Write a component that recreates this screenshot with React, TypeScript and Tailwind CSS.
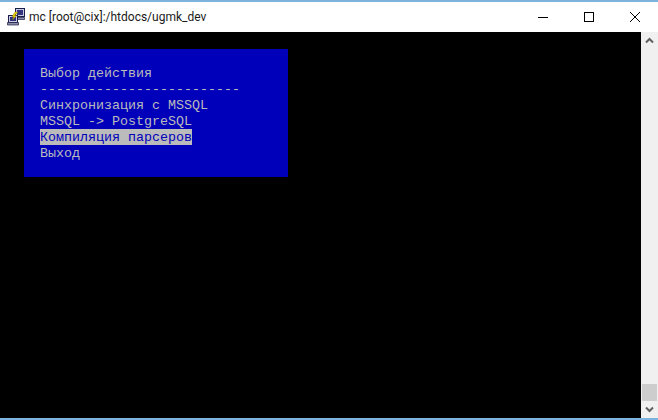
const lines = [
  { text: 'Выбор действия' },
  { text: '-------------------------' },
  { text: 'Синхронизация с MSSQL' },
  { text: 'MSSQL -> PostgreSQL' },
  { text: 'Компиляция парсеров', selected: true },
  { text: 'Выход' },
]

function PuttyIcon() {
  return (
    <svg width="18" height="18" viewBox="0 0 18 18" className="shrink-0">
      <rect x="8.5" y="0.5" width="9" height="8" fill="#c8cce4" stroke="#1c1c48" />
      <rect x="10" y="2" width="6" height="5" fill="#34347c" />
      <path d="M8.5 9.5h9v2h-9z" fill="#8a8ea8" stroke="#1c1c48" strokeWidth="0.7" />
      <rect x="1.5" y="7.5" width="9" height="7" fill="#c8cce4" stroke="#1c1c48" />
      <rect x="3" y="9" width="6" height="4" fill="#34347c" />
      <path d="M0.5 14.5h11v2.5H0.5z" fill="#8a8ea8" stroke="#1c1c48" strokeWidth="0.7" />
      <path d="M11 4 7.5 7.5h2L5.5 12l1.2-3.5H5L8 4z" fill="#f5d800" stroke="#7a6a00" strokeWidth="0.4" />
    </svg>
  )
}

function TitleBar() {
  return (
    <div className="flex h-[30px] items-center bg-white pl-[7px]">
      <PuttyIcon />
      <span className="ml-[4px] font-['Roboto',sans-serif] text-[12px] text-[#1a1a1a]">mc [root@cix]:/htdocs/ugmk_dev</span>
      <div className="ml-auto flex">
        <button className="flex h-[30px] w-[46px] items-center justify-center">
          <svg width="10" height="10" viewBox="0 0 10 10"><path d="M0 5.5h10" stroke="#000" /></svg>
        </button>
        <button className="flex h-[30px] w-[46px] items-center justify-center">
          <svg width="10" height="10" viewBox="0 0 10 10"><rect x="0.5" y="0.5" width="9" height="9" fill="none" stroke="#000" /></svg>
        </button>
        <button className="flex h-[30px] w-[46px] items-center justify-center">
          <svg width="10" height="10" viewBox="0 0 10 10"><path d="M0 0l10 10M10 0L0 10" stroke="#000" /></svg>
        </button>
      </div>
    </div>
  )
}

function Scrollbar() {
  return (
    <div className="flex w-[17px] flex-col bg-[#f0f0f0]">
      <div className="flex h-[17px] items-center justify-center">
        <svg width="9" height="7" viewBox="0 0 9 7"><path d="M1 5.5 4.5 2 8 5.5" fill="none" stroke="#606060" strokeWidth="2" /></svg>
      </div>
      <div className="flex-1" />
      <div className="mx-px h-[17px] bg-[#cdcdcd]" />
      <div className="flex h-[17px] items-center justify-center">
        <svg width="9" height="7" viewBox="0 0 9 7"><path d="M1 1.5 4.5 5 8 1.5" fill="none" stroke="#606060" strokeWidth="2" /></svg>
      </div>
    </div>
  )
}

export default function App() {
  return (
    <div className="flex h-[420px] w-[658px] flex-col overflow-hidden border-y-2 border-[#7eb4dc] bg-white">
      <TitleBar />
      <div className="flex min-h-0 flex-1">
        <div className="flex-1 bg-black pl-[24px] pt-[17px]">
          <div className="h-[128px] w-[264px] bg-[#0000bb] p-[16px] font-['Liberation_Mono',monospace] text-[13.33px] text-[#bbbbbb]">
            {lines.map(line => (
              <div key={line.text} className="h-[16px] whitespace-pre">
                <span className={`inline-block h-[16px] align-top leading-[18px] ${line.selected ? 'bg-[#bbbbbb] text-[#0000bb]' : ''}`}>{line.text}</span>
              </div>
            ))}
          </div>
        </div>
        <Scrollbar />
      </div>
    </div>
  )
}
